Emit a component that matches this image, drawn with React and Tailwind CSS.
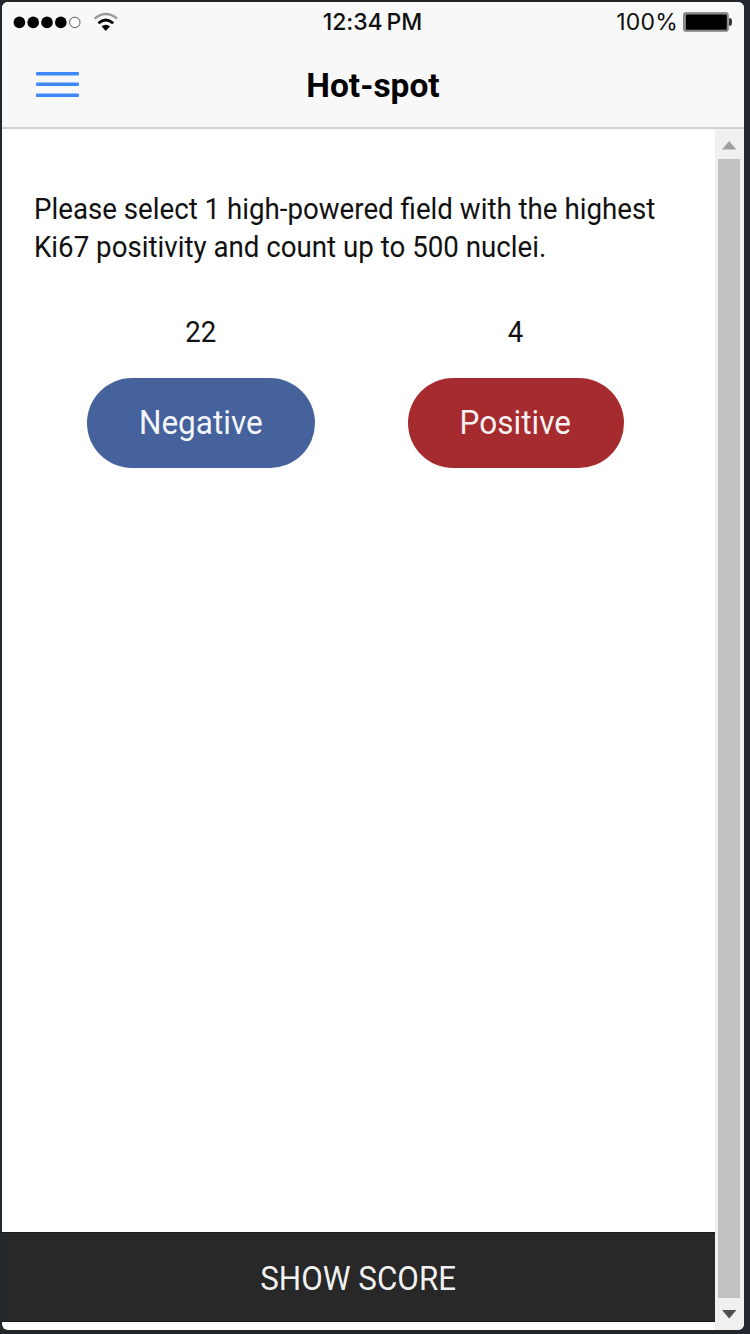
function SignalDots() {
  return (
    <svg className="block h-6 w-28" viewBox="0 0 112 24" aria-hidden="true">
      <circle cx="7.4" cy="12.4" r="5.8" />
      <circle cx="21.2" cy="12.4" r="5.8" />
      <circle cx="35" cy="12.4" r="5.8" />
      <circle cx="48.8" cy="12.4" r="5.8" />
      <circle cx="62.8" cy="12.4" r="5.2" fill="#fff" stroke="#555" strokeWidth="1" />
      <path d="M82.5 8.7Q93.8-.7 105.2 8.7" fill="none" stroke="#999" strokeWidth="2.2" />
      <path d="M86.4 13.3Q93.8 6.7 101.2 13.3" fill="none" stroke="#000" strokeWidth="2.8" />
      <path d="M89.6 16.3Q93.8 13 98 16.3L93.8 21Z" />
    </svg>
  );
}

function Battery() {
  return (
    <svg className="block h-5 w-[50px]" viewBox="0 0 50 20" aria-hidden="true">
      <rect x="0.7" y="0.9" width="44.4" height="18.2" rx="2" fill="#999" stroke="#777" strokeWidth="1.2" />
      <rect x="2.8" y="2.5" width="41" height="15.2" rx="1" />
      <path d="M46 6.3h1.5q1.5 0 1.5 3.7t-1.5 3.7H46Z" fill="#333" />
    </svg>
  );
}

function Counter({ children, count, className }) {
  return (
    <div className="flex flex-1 flex-col items-center">
      <div className="h-[64px] text-[30px] leading-[36px]">
        <span className="inline-block scale-x-[0.92]">{count}</span>
      </div>
      <button className={"flex h-[90px] items-center justify-center rounded-full text-[33px] text-white/95 " + className}>
        {children}
      </button>
    </div>
  );
}

export default function App() {
  return (
    <div className="h-[1334px] w-[750px] bg-[#22262d] pt-[2px] pl-[2px] font-['Roboto',sans-serif] text-[#111]">
      <div className="flex h-[1328px] w-[742px] flex-col overflow-hidden rounded-[6px] bg-white">
        <header className="h-[127px] shrink-0 border-b-2 border-[#d0d0d0] bg-[#f8f8f8]">
          <div className="grid h-10 grid-cols-3 items-center pr-[11px] pl-[10px] font-['Inter',sans-serif] text-[23px]">
            <SignalDots />
            <span className="text-center font-medium tracking-[-0.1px] [word-spacing:-2px] whitespace-nowrap">12:34 PM</span>
            <div className="flex items-center justify-end gap-[5px]">
              <span className="tracking-[0.2px]">100%</span>
              <Battery />
            </div>
          </div>
          <div className="grid h-[86px] grid-cols-3 items-center px-[34px]">
            <svg className="block h-7 w-[43px]" viewBox="0 0 43 28" fill="#3f88fa">
              <rect y="1" width="43" height="3.6" rx="1" />
              <rect y="11.4" width="43" height="3.6" rx="1" />
              <rect y="22.4" width="43" height="3.6" rx="1" />
            </svg>
            <h1 className="pt-[3px] text-center text-[33.5px] font-bold text-black">Hot-spot</h1>
          </div>
        </header>
        <div className="flex min-h-0 flex-1">
          <main className="flex w-[713px] flex-col pb-[8px]">
            <p className="px-8 pt-[61px] text-[30px] leading-[38px]">
              <span className="inline-block origin-left scale-x-[0.923] whitespace-nowrap">
                Please select 1 high-powered field with the highest
                <br />
                Ki67 positivity and count up to 500 nuclei.
              </span>
            </p>
            <div className="mt-[48px] flex pr-[42px] pl-[41px]">
              <Counter count="22" className="w-[228px] bg-[#46629c]">
                <span className="scale-x-[0.955]">Negative</span>
              </Counter>
              <Counter count="4" className="w-[216px] bg-[#a52b2e]">
                <span className="scale-x-[0.955]">Positive</span>
              </Counter>
            </div>
            <button className="mt-auto flex h-[90px] items-center justify-center border-y border-[#181818] bg-[#282828] pt-[4px] text-[33px] text-white/95">
              <span className="scale-x-[0.95]">SHOW SCORE</span>
            </button>
          </main>
          <div className="flex flex-1 flex-col items-center bg-[#f0f0f0]">
            <svg className="h-[30px] w-[29px] shrink-0" viewBox="0 0 29 30">
              <path d="M7 20.5L14.2 12L21.4 20.5Z" fill="#a0a0a0" />
            </svg>
            <div className="mr-px w-[22px] flex-1 bg-[#c1c1c1]" />
            <svg className="h-[32px] w-[29px] shrink-0" viewBox="0 0 29 32">
              <path d="M7 12L21.4 12L14.2 20.5Z" fill="#505050" />
            </svg>
          </div>
        </div>
      </div>
    </div>
  );
}
